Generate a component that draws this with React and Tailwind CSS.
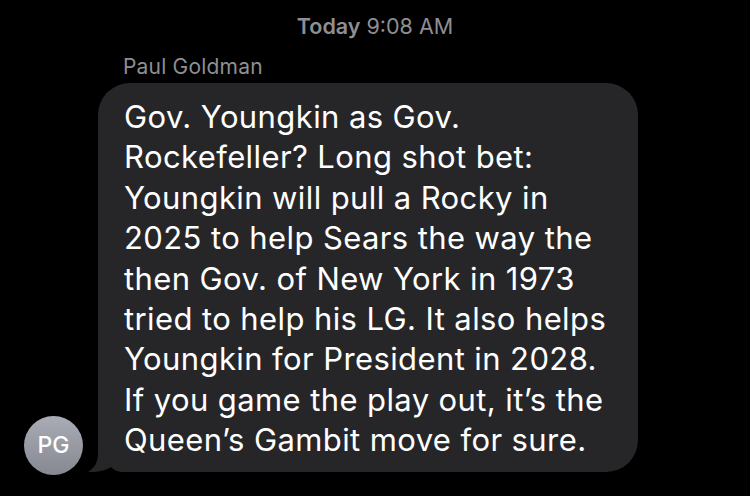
import React from 'react';

const lines = [
  'Gov. Youngkin as Gov.',
  'Rockefeller? Long shot bet:',
  'Youngkin will pull a Rocky in',
  '2025 to help Sears the way the',
  'then Gov. of New York in 1973',
  'tried to help his LG. It also helps',
  'Youngkin for President in 2028.',
  'If you game the play out, it\u2019s the',
  'Queen\u2019s Gambit move for sure.',
];

const Tail = () => (
  <svg className="absolute left-[-10px] bottom-0" width="44" height="34" viewBox="0 0 44 34">
    <path
      d="M10 0 H44 V34 H36 C30 34 26 32 23 29 C17 33 8 34.5 0 34 C6 30 10 25 10 16 Z"
      fill="#262629"
    />
  </svg>
);

export default function App() {
  return (
    <div
      className="w-[750px] h-[496px] bg-black overflow-hidden"
      style={{ fontFamily: 'Inter, "Noto Sans", sans-serif' }}
    >
      <div className="pt-[13px] text-center text-[21.5px] leading-[26px] text-[#8e8e93]">
        <span className="font-semibold">Today</span> 9:08 AM
      </div>
      <div className="pl-[123px] mt-[16px] text-[21px] leading-[24px] tracking-[0.2px] text-[#8e8e93]">Paul Goldman</div>
      <div className="flex items-end mt-[4px]">
        <div className="w-[98px] flex justify-start pl-[24px]">
          <div className="w-[59px] h-[59px] mb-[-3px] rounded-full bg-gradient-to-b from-[#a9acb4] to-[#868991] flex items-center justify-center text-white text-[23px] font-medium">
            PG
          </div>
        </div>
        <div className="relative">
          <Tail />
          <div className="relative w-[540px] rounded-[32px] bg-[#262629] pl-[26px] pr-[20px] pt-[14px] pb-[11.4px] text-white text-[31px] leading-[40.4px] tracking-[0.4px]">
            {lines.map((l, i) => (
              <div key={i} className="whitespace-nowrap">{l}</div>
            ))}
          </div>
        </div>
      </div>
    </div>
  );
}
